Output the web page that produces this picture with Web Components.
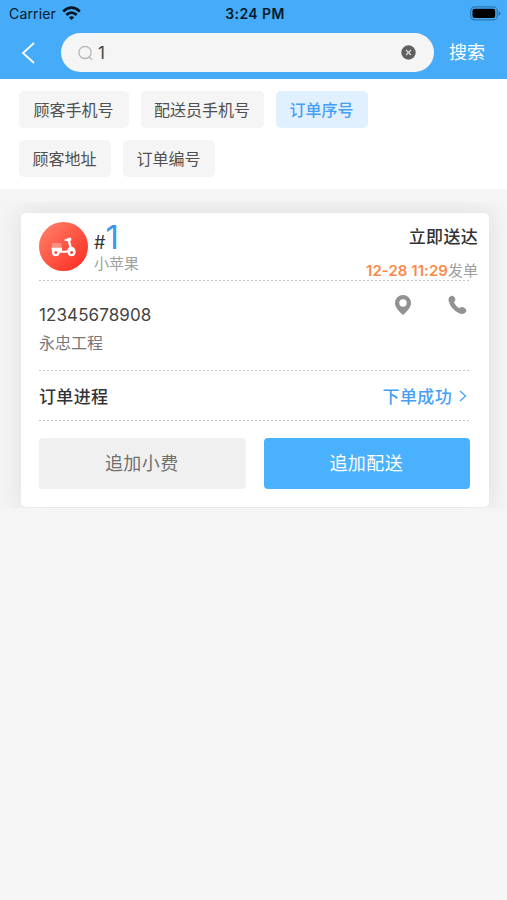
<!DOCTYPE html>
<html lang="zh-CN">
<head>
<meta charset="utf-8">
<title>订单搜索</title>
<style>
html,body{margin:0;height:100%;background:#f5f5f5}
body{font-family:Inter,"Noto Sans CJK SC",sans-serif;color:#444;overflow:hidden}
</style>
</head>
<body>
<order-app></order-app>
<script>
function define(name, html) {
  const t = document.createElement('template');
  t.innerHTML = '<style>*{box-sizing:border-box}svg{display:block;flex:none}</style>' + html;
  customElements.define(name, class extends HTMLElement {
    constructor() {
      super();
      this.attachShadow({mode: 'open'}).appendChild(t.content.cloneNode(true));
    }
  });
}

define('status-bar', `<style>
:host{display:grid;grid-template-columns:1fr auto 1fr;align-items:center;height:28px;padding:0 6px 0 9px;color:#061a2b;font-size:14px;line-height:20px}
.l{display:flex;align-items:center;gap:6px;letter-spacing:.15px}
.l svg{margin-top:-2px}
b{font-size:14px;font-weight:600;letter-spacing:.4px}
.r{justify-self:end;margin-top:-2px}
</style>
<div class="l"><span>Carrier</span><svg width="19" height="14" viewBox="0 0 19 14" fill="none" stroke="#061522" stroke-width="2.7"><path d="M1.200 5.400Q9.500 -2 17.800 5.400M4.300 8.900Q9.500 4.500 14.700 8.900"/><path d="M9.500 13.900L6.800 11.200Q9.500 9.200 12.200 11.200Z" fill="#061522" stroke="none"/></svg></div>
<b>3:24 PM</b>
<svg class="r" width="31" height="15" viewBox="0 0 31 15"><rect x=".7" y=".9" width="26.500" height="13" rx="4" fill="none" stroke="#2f77ae" stroke-width="1.200"/><rect x="2.500" y="2.800" width="22.700" height="9.200" rx="2" fill="#000"/><path d="M28.500 5v5q2-1 2-2.500T28.500 5Z" fill="#2f77ae"/></svg>`);

define('search-header', `<style>
:host{display:flex;align-items:center;height:51px;padding:0 21px 2px 21px}
.f{display:flex;align-items:center;width:373px;height:39px;border-radius:20px;background:#f5f5f5;margin:0 15px 0 25px;padding:0 18px 0 17px;font-size:17px;color:#444}
.f span{flex:1;padding-left:5px}
.s{font-size:18px;line-height:26px;color:#fff;white-space:nowrap}
</style>
<svg width="15" height="22" viewBox="0 0 15 22" fill="none" stroke="#fff" stroke-width="1.800"><path d="M13 1L2 11L13 21"/></svg>
<div class="f"><svg width="15" height="16" viewBox="0 0 15 16" fill="none" stroke="#b4b4b4" stroke-width="1.300"><circle cx="7" cy="7.400" r="6.100"/><path d="M11 12l3 2.500"/></svg><span>1</span><svg width="15" height="15" viewBox="0 0 15 15"><circle cx="7.500" cy="7.500" r="7.200" fill="#606060"/><path d="M5 5l5 5M10 5l-5 5" stroke="#ddd" stroke-width="1.200"/></svg></div>
<span class="s">搜索</span>`);

define('filter-chip', `<style>
:host{display:flex;align-items:center;justify-content:center;height:37px;border-radius:5px;background:#f5f5f5;font-size:16px;line-height:22px;color:#505050;padding-right:1px;box-sizing:border-box}
:host([active]){background:#e0f0ff;color:#459ff5;font-weight:500}
</style><slot></slot>`);

define('filter-panel', `<style>
:host{display:flex;flex-direction:column;gap:12px;height:110px;padding:12px 19px 0;background:#fff;flex:none}
div{display:flex;gap:12px}
</style>
<div><filter-chip style="width:110px">顾客手机号</filter-chip><filter-chip style="width:123px">配送员手机号</filter-chip><filter-chip active style="width:92px">订单序号</filter-chip></div>
<div><filter-chip style="width:92px">顾客地址</filter-chip><filter-chip style="width:92px">订单编号</filter-chip></div>`);

define('dotted-rule', `<style>
:host{display:block;height:1px;background:repeating-linear-gradient(90deg,#c6c6c6 0 2px,#fff 2px 4px)}
</style>`);

define('scooter-badge', `<style>
:host{display:grid;place-items:center;width:49px;height:49px;border-radius:50%;background:linear-gradient(135deg,#ff7c65 10%,#fc3529 85%);flex:none}
</style>
<svg width="25" height="20" viewBox="0 0 25 20" fill="#fff"><path d="M1 6.600h9.500v1H1zM1 8.400h9.500v1H1z" opacity=".6"/><path d="M.5 10.500h10.500v3.300h4.300L18.300 10 16.800 4.200l-3.300-.4V2.500l5.500-2 1.300.6v2.300l-1.200.4L20.500 9.500q4 1 4 5v1.300H1z"/><circle cx="4.800" cy="15.500" r="3.800"/><circle cx="20.600" cy="15.500" r="3.800"/><circle cx="4.800" cy="15.500" r="1.500" fill="#fd5142"/><circle cx="20.600" cy="15.500" r="1.500" fill="#fd4538"/></svg>`);

define('action-button', `<style>
:host{display:flex;align-items:center;justify-content:center;flex:1;height:51px;border-radius:4px;background:#f0f0f0;color:#707070;font-size:18px;letter-spacing:.4px;line-height:26px;box-sizing:border-box;padding:1px 1px 0 0}
:host([primary]){background:#4ab1ff;color:#fff}
</style><slot></slot>`);

define('order-card', `<style>
:host{display:block;box-sizing:border-box;height:294px;border-radius:5px;background:#fff;box-shadow:0 0 24px 4px rgba(0,0,0,.08);padding:0 19px 0 18px}
.top{display:flex;height:67px;padding-top:9px}
.id{flex:1;padding-left:6px}
.no{display:flex;align-items:baseline;height:31px;line-height:31px;font-size:18px;color:#333}
.no b{font-size:33px;font-weight:400;color:#3b98f2;line-height:31px}
.name{font-size:15px;line-height:20px;color:#a0a0a0;margin-top:1px}
.when{text-align:right;margin-right:-8px}
.now{font-size:17px;line-height:26px;font-weight:500;color:#333;padding-top:2px;letter-spacing:.3px}
.sent{font-size:15px;line-height:22px;color:#a0a0a0;margin-top:9.500px;height:20px}
.sent b{font-weight:600;color:#fb8a48;font-size:15px;letter-spacing:.05px}
.contact{display:flex;height:89px;justify-content:space-between}
.tel{font-size:17px;line-height:24px;color:#444;padding-top:21.500px;letter-spacing:.1px}
.addr{font-size:16px;line-height:24px;color:#777;margin-top:4.500px}
.ic{display:flex;gap:36px;padding:14px 3px 0 0}
.prog{display:flex;justify-content:space-between;align-items:center;height:49px;font-size:17px;font-weight:500;color:#333;letter-spacing:.35px}
.ok{display:flex;align-items:center;gap:7px;color:#459ff5;padding-right:3px}
.btns{display:flex;gap:18px;padding-top:17px}
</style>
<div class="top"><scooter-badge></scooter-badge>
<div class="id"><div class="no">#<b>1</b></div><div class="name">小苹果</div></div>
<div class="when"><div class="now">立即送达</div><div class="sent"><b>12-28 11:29</b>发单</div></div></div>
<dotted-rule></dotted-rule>
<div class="contact"><div><div class="tel">12345678908</div><div class="addr">永忠工程</div></div>
<div class="ic"><svg width="18" height="20" viewBox="0 0 18 20"><path fill="#929292" fill-rule="evenodd" d="M9 0a8 8 0 0 1 8 8c0 4.800-4.500 8.800-8 12C5.500 16.800 1 12.800 1 8a8 8 0 0 1 8-8zm0 4.300a3.700 3.700 0 1 0 0 7.400a3.700 3.700 0 0 0 0-7.400z"/></svg><svg width="19" height="20" viewBox="0 0 19 20"><path fill="#929292" d="M1 2.500Q2.800 .2 5 .8Q7.300 2.400 7.400 4.500Q7.400 6 5.800 7.300Q7.800 11.300 11.300 13.300Q12.800 11.800 14.500 12Q17 12.800 18.300 14.800Q18.700 16.500 17 18Q14.800 20 11 18.300Q2.500 14 .6 5.800Q.3 3.700 1 2.500Z"/></svg></div></div>
<dotted-rule></dotted-rule>
<div class="prog"><span>订单进程</span><span class="ok">下单成功<svg width="8" height="12" viewBox="0 0 8 12" fill="none" stroke="#459ff5" stroke-width="1.300"><path d="M1 1l5.500 5L1 11"/></svg></span></div>
<dotted-rule></dotted-rule>
<div class="btns"><action-button>追加小费</action-button><action-button primary>追加配送</action-button></div>`);

define('order-app', `<style>
:host{display:flex;flex-direction:column;height:900px;background:#f5f5f5}
header{background:#46abf8;height:79px;flex:none}
main{height:306px;margin-top:13px;padding:11px 18px 0 21px;overflow:hidden}
</style>
<header><status-bar></status-bar><search-header></search-header></header>
<filter-panel></filter-panel>
<main><order-card></order-card></main>`);
</script>
</body>
</html>
